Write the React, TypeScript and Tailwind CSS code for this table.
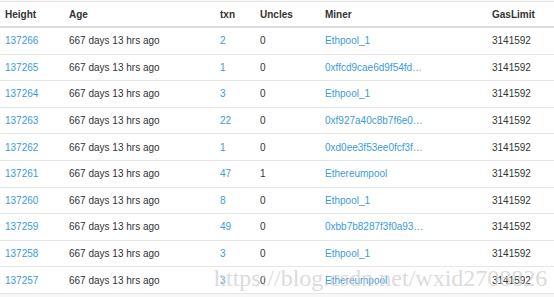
import React from 'react';

interface Block {
  height: number;
  txn: number;
  uncles: number;
  miner: string;
}

const blocks: Block[] = [
  { height: 137266, txn: 2, uncles: 0, miner: 'Ethpool_1' },
  { height: 137265, txn: 1, uncles: 0, miner: '0xffcd9cae6d9f54fd…' },
  { height: 137264, txn: 3, uncles: 0, miner: 'Ethpool_1' },
  { height: 137263, txn: 22, uncles: 0, miner: '0xf927a40c8b7f6e0…' },
  { height: 137262, txn: 1, uncles: 0, miner: '0xd0ee3f53ee0fcf3f…' },
  { height: 137261, txn: 47, uncles: 1, miner: 'Ethereumpool' },
  { height: 137260, txn: 8, uncles: 0, miner: 'Ethpool_1' },
  { height: 137259, txn: 49, uncles: 0, miner: '0xbb7b8287f3f0a93…' },
  { height: 137258, txn: 3, uncles: 0, miner: 'Ethpool_1' },
  { height: 137257, txn: 3, uncles: 0, miner: 'Ethereumpool' },
];

const cols = 'grid grid-cols-[64px_151px_40px_65px_167px_1fr] items-center';

export default function App() {
  return (
    <div className="relative w-[554px] h-[297px] overflow-hidden bg-[#f7f7f7] font-['Liberation_Sans',Arial,sans-serif] text-[10px] text-[#333]">
      <div className="bg-white border-t border-[#e4e4e4] mt-px">
        <div className={`${cols} h-[26px] border-b-2 border-[#dddddd] font-bold pl-[5px]`}>
          <div>Height</div>
          <div>Age</div>
          <div>txn</div>
          <div>Uncles</div>
          <div>Miner</div>
          <div>GasLimit</div>
        </div>
        {blocks.map((b) => (
          <div key={b.height} className={`${cols} h-[26.6px] border-b border-[#e6e6e6] pl-[5px]`}>
            <div className="text-[#3b9bd8]">{b.height}</div>
            <div>667 days 13 hrs ago</div>
            <div className="text-[#3b9bd8]">{b.txn}</div>
            <div>{b.uncles}</div>
            <div className="text-[#3b9bd8]">{b.miner}</div>
            <div>3141592</div>
          </div>
        ))}
      </div>
      {/* csdn watermark over the last row */}
      <div className="absolute left-[214px] top-[266px] leading-none font-['Liberation_Serif',serif] text-[24px] text-[#cfcfcf]/75 pointer-events-none whitespace-nowrap">
        https://blog.csdn.net/wxid2708826
      </div>
    </div>
  );
}
